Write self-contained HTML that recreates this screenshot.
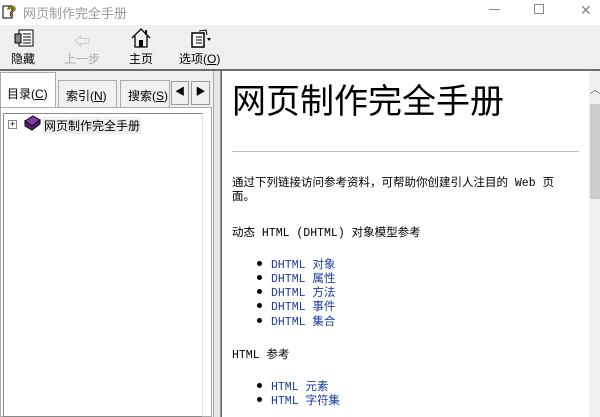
<!DOCTYPE html>
<html><head><meta charset="utf-8"><style>
*{margin:0;padding:0;box-sizing:border-box}
body{width:600px;height:417px;overflow:hidden;background:#f0f0f0;font-family:"Liberation Sans","Noto Sans CJK SC",sans-serif;font-size:12px;position:relative}
.abs{position:absolute}
.title{left:0;top:0;width:600px;height:25px;background:#fff}
.tb{left:0;top:25px;width:600px;height:44px;background:#efefef}
.btn{position:absolute;top:28px;text-align:center;font-size:12px;color:#000}
.mono{font-family:"Liberation Mono","Noto Sans CJK SC",monospace;font-size:11.5px}
a{color:#1a3d9e;text-decoration:none}
.li{position:absolute;left:271px}
.li:before{content:"";position:absolute;left:-14px;top:5px;width:5px;height:5px;border-radius:50%;background:#000}
</style></head><body>
<div class="abs title"></div>
<svg class="abs" style="left:2px;top:2px" width="16" height="18"><rect x="1" y="4" width="9" height="12" fill="#fff" stroke="#000"/><text x="5" y="14" font-size="15" font-weight="bold" fill="#d4c000" stroke="#000" stroke-width=".6" font-family="Liberation Sans">?</text></svg>
<div class="abs" style="left:23px;top:3px;color:#999;font-size:13px">网页制作完全手册</div>
<div class="abs" style="left:489px;top:9px;width:11px;border-top:1px solid #888"></div>
<div class="abs" style="left:534px;top:4px;width:10px;height:10px;border:1px solid #888"></div>
<div class="abs" style="left:580px;top:2px;font-size:14px;color:#888">✕</div>
<div class="abs tb"></div>
<svg class="abs" style="left:13px;top:28px" width="22" height="20"><rect x="6" y="2" width="14" height="16" fill="#fff" stroke="#000"/><rect x="2" y="6" width="6" height="9" fill="#888" stroke="#000"/><path d="M10 6h8M10 9h8M10 12h8M10 15h8" stroke="#000"/></svg>
<div class="btn" style="left:11px;top:50px">隐藏</div>
<div class="abs" style="left:74px;top:28px;color:#bbb;font-size:16px">⇦</div>
<div class="btn" style="left:64px;top:50px;color:#aaa">上一步</div>
<svg class="abs" style="left:130px;top:27px" width="22" height="22"><path d="M2 11L11 2 20 11M5 9v11h12V9" fill="none" stroke="#000" stroke-width="1.3"/><rect x="9" y="13" width="4" height="7" fill="#000"/><rect x="15" y="3" width="2" height="5" fill="#000"/></svg>
<div class="btn" style="left:129px;top:50px">主页</div>
<svg class="abs" style="left:190px;top:28px" width="22" height="20"><rect x="2" y="5" width="12" height="14" fill="#fff" stroke="#000" stroke-width="1.5"/><path d="M6 9h6M6 12h6M6 15h6" stroke="#000"/><path d="M9 3l7-1 1 5" fill="none" stroke="#000"/><path d="M17 10h4l-2 3z" fill="#000"/></svg>
<div class="btn" style="left:179px;top:50px">选项(<u>O</u>)</div>
<div class="abs" style="left:0;top:69px;width:600px;height:2px;background:#6d6d6d"></div>
<div class="abs" style="left:0;top:72px;width:56px;height:36px;background:#fff;border:1px solid #aaa;border-bottom:none"></div>
<div class="abs" style="left:7px;top:85px">目录(<u>C</u>)</div>
<div class="abs" style="left:58px;top:80px;width:59px;height:28px;border:1px solid #aaa;border-bottom:none"></div>
<div class="abs" style="left:66px;top:87px">索引(<u>N</u>)</div>
<div class="abs" style="left:120px;top:80px;width:50px;height:28px;border:1px solid #aaa;border-bottom:none;overflow:hidden"><span style="position:absolute;left:7px;top:6px;white-space:nowrap">搜索(<u>S</u>)</span></div>
<div class="abs" style="left:171px;top:81px;width:18px;height:24px;border:1px solid #999;background:#efefef;font-size:10px;text-align:center;line-height:22px">◀</div>
<div class="abs" style="left:191px;top:81px;width:19px;height:24px;border:1px solid #999;background:#efefef;font-size:10px;text-align:center;line-height:22px">▶</div>
<div class="abs" style="left:0;top:107px;width:212px;height:310px;background:#fff;border:1px solid #aaa"></div>
<div class="abs" style="left:3px;top:113px;width:200px;height:304px;border:1px solid #888;border-right-color:#ddd"></div>
<div class="abs" style="left:8px;top:120px;width:9px;height:9px;border:1px solid #888;font-size:9px;line-height:7px;text-align:center">+</div>
<svg class="abs" style="left:23px;top:115px" width="18" height="16"><path d="M2 6l8-5 7 4-8 6z" fill="#8a3aa8" stroke="#000"/><path d="M2 6v5l7 4 8-6V5l-8 6z" fill="#5c1f77" stroke="#000"/></svg>
<div class="abs" style="left:43px;top:117px;background:#efefef;padding:0 1px">网页制作完全手册</div>
<div class="abs" style="left:213px;top:71px;width:8px;height:346px;background:#e6e6e6;border-left:1px solid #aaa;border-right:1px solid #999"></div>
<div class="abs" style="left:221px;top:71px;width:379px;height:346px;background:#fff;border-left:1px solid #666"></div>
<div class="abs" style="left:589px;top:71px;width:11px;height:346px;background:#f0f0f0"></div>
<div class="abs" style="left:590px;top:81px;font-size:10px;color:#555">︿</div>
<div class="abs" style="left:590px;top:104px;width:10px;height:95px;background:#cdcdcd"></div>
<div class="abs" style="left:232px;top:83px;font-size:34px;line-height:38px">网页制作完全手册</div>
<div class="abs" style="left:232px;top:151px;width:347px;border-top:1px solid #c0c0c0"></div>
<div class="abs mono" style="left:232px;top:177px;line-height:14px;white-space:nowrap">通过下列链接访问参考资料，可帮助你创建引人注目的 Web 页<br>面。</div>
<div class="abs mono" style="left:232px;top:224px">动态 HTML (DHTML) 对象模型参考</div>
<div class="li mono" style="top:256px"><a>DHTML 对象</a></div>
<div class="li mono" style="top:270px"><a>DHTML 属性</a></div>
<div class="li mono" style="top:284px"><a>DHTML 方法</a></div>
<div class="li mono" style="top:298px"><a>DHTML 事件</a></div>
<div class="li mono" style="top:313px"><a>DHTML 集合</a></div>
<div class="abs mono" style="left:232px;top:346px">HTML 参考</div>
<div class="li mono" style="top:378px"><a>HTML 元素</a></div>
<div class="li mono" style="top:392px"><a>HTML 字符集</a></div>
</body></html>
